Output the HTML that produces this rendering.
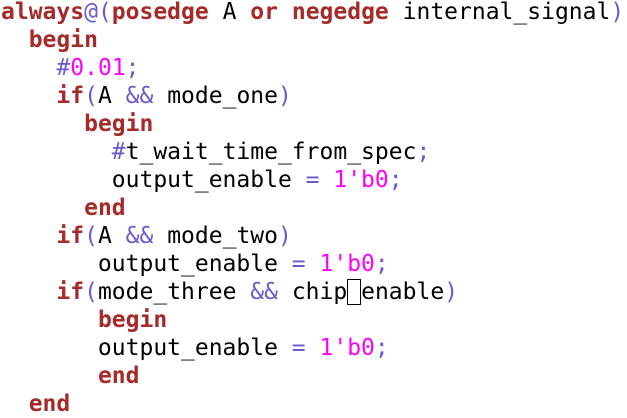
<html><head><style>
body{margin:0;background:#fff;width:627px;height:411px;overflow:hidden}
pre{margin:0;position:absolute;top:-2px;left:1px;font-family:"DejaVu Sans Mono","Liberation Mono",monospace;font-size:23px;line-height:28px;color:#000}
.k{color:#a52a2a;font-weight:bold}
.o{color:#6a5acd}
.n{color:#f0f}
.c{outline:1.5px solid #000;outline-offset:-1px;color:transparent}
</style></head><body><pre><span class="k">always</span><span class="o">@(</span><span class="k">posedge</span> A <span class="k">or</span> <span class="k">negedge</span> internal_signal<span class="o">)</span>
  <span class="k">begin</span>
    <span class="o">#</span><span class="n">0.01</span><span class="o">;</span>
    <span class="k">if</span><span class="o">(</span>A <span class="o">&amp;&amp;</span> mode_one<span class="o">)</span>
      <span class="k">begin</span>
        <span class="o">#</span>t_wait_time_from_spec<span class="o">;</span>
        output_enable <span class="o">=</span> <span class="n">1'b0</span><span class="o">;</span>
      <span class="k">end</span>
    <span class="k">if</span><span class="o">(</span>A <span class="o">&amp;&amp;</span> mode_two<span class="o">)</span>
       output_enable <span class="o">=</span> <span class="n">1'b0</span><span class="o">;</span>
    <span class="k">if</span><span class="o">(</span>mode_three <span class="o">&amp;&amp;</span> chip<span class="c">_</span>enable<span class="o">)</span>
       <span class="k">begin</span>
       output_enable <span class="o">=</span> <span class="n">1'b0</span><span class="o">;</span>
       <span class="k">end</span>
  <span class="k">end</span></pre></body></html>
